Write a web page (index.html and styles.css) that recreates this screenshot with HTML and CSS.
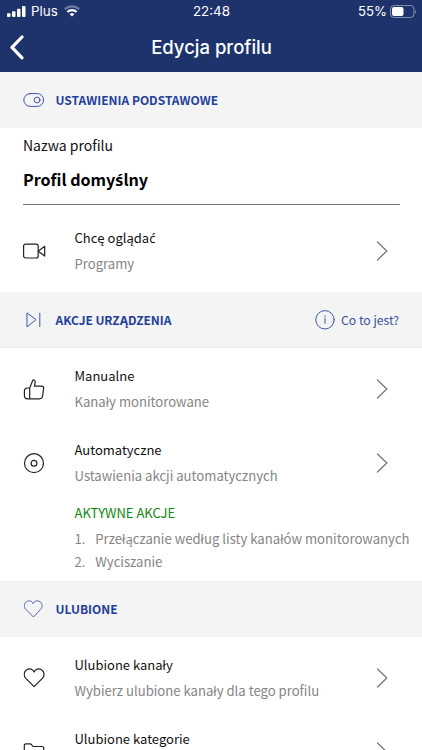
FILE: index.html
```html
<!DOCTYPE html>
<html lang="pl">
<head>
<meta charset="utf-8">
<meta name="viewport" content="width=device-width, initial-scale=1">
<title>Edycja profilu</title>
<link rel="stylesheet" href="styles.css">
</head>
<body>
<svg class="sprite" width="0" height="0">
  <symbol id="chevron" viewBox="0 0 12 20"><path d="M1.500 1 10.800 10 1.500 19"/></symbol>
  <symbol id="heart" viewBox="0 0 22 20"><path d="M10.600 18.600 2.300 10.300C-.100 7.900.300 3.700 2.900 2 5.800.100 9.500.900 10.600 4 11.700.900 15.400.100 18.300 2 20.900 3.700 21.300 7.900 18.900 10.300Z"/></symbol>
</svg>
<header class="top">
  <div class="status">
    <div class="carrier">
      <svg width="19" height="11" viewBox="0 0 19 11" fill="#fff"><rect x="0" y="7.300" width="3.500" height="3.700" rx=".9"/><rect x="5" y="5.200" width="3.500" height="5.800" rx=".9"/><rect x="10" y="2.800" width="3.500" height="8.200" rx=".9"/><rect x="15" y="0" width="3.500" height="11" rx=".9"/></svg>
      <span class="plus">Plus</span>
      <svg width="16" height="12" viewBox="0 0 16 12" fill="none" stroke="#fff" stroke-width="2.200"><path d="M.9 4.300a10 10 0 0 1 14.200 0" opacity=".35"/><path d="M3.400 7a6.500 6.500 0 0 1 9.200 0"/><path d="M5.700 9.200a3.300 3.300 0 0 1 4.600 0L8 11.600Z" fill="#fff" stroke="none"/></svg>
    </div>
    <span class="clock">22:48</span>
    <div class="power">
      <span>55%</span>
      <svg width="27" height="13" viewBox="0 0 27 13"><rect x=".5" y=".5" width="23.500" height="12" rx="3.500" fill="none" stroke="#fff" stroke-opacity=".45"/><rect x="2" y="2" width="11.500" height="9" rx="2" fill="#fff"/><path d="M25.200 4.500q1.500 2 0 4Z" fill="#fff" opacity=".5"/></svg>
    </div>
  </div>
  <div class="nav">
    <svg class="back" width="16" height="25" viewBox="0 0 16 25"><path d="M14 2 4 12.400 14 22.800"/></svg>
    <h1>Edycja profilu</h1>
  </div>
</header>

<main>
  <section>
    <div class="band">
      <svg class="ico blue" width="22" height="14" viewBox="0 0 22 14"><rect x=".3" y=".6" width="19.800" height="12.800" rx="6.400"/><circle cx="13.600" cy="7" r="2.900"/></svg>
      <h2>USTAWIENIA PODSTAWOWE</h2>
    </div>
    <div class="field">
      <label>Nazwa profilu</label>
      <div class="value">Profil domy<span class="acute">ś</span>lny</div>
    </div>
    <div class="row">
      <svg class="ico" width="23" height="16" viewBox="0 0 23 16"><rect x=".6" y="1.200" width="14.600" height="13.800" rx="2"/><path d="M15.200 8.200 21.700 3.300V13.100Z"/></svg>
      <div class="copy"><p class="name">Chcę ogląda<span class="acute">ć</span></p><p class="sub">Programy</p></div>
      <svg class="chev" width="12" height="20"><use href="#chevron"/></svg>
    </div>
  </section>

  <section>
    <div class="band device">
      <svg class="ico blue" width="22" height="16" viewBox="0 0 22 16"><path d="M3.800 1.100 12.500 7.700 3.800 14.700ZM16.300 1.200V14.600"/></svg>
      <h2>AKCJE URZĄDZENIA</h2>
      <a class="help">
        <svg class="ico blue" width="20" height="20" viewBox="0 0 20 20"><circle cx="10" cy="9.800" r="9.200"/><path d="M10 8.300V13.300M10 5.900V6.700"/></svg>
        <span>Co to jest?</span>
      </a>
    </div>
    <div class="list">
      <div class="row">
        <svg class="ico" width="22" height="22" viewBox="0 0 22 22"><path d="M6.200 10 9.200 2.500Q9.900 1.300 10.900 2.100 12 3 11.700 4.600L11 8.200H18.100Q20.400 8.200 20.100 10.400L19.100 18Q18.700 20.800 16 20.800H4.200Q.9 20.800.9 17.600V13.100Q.9 10 3.800 10H6.200V20.800"/></svg>
        <div class="copy"><p class="name">Manualne</p><p class="sub">Kanały monitorowane</p></div>
        <svg class="chev" width="12" height="20"><use href="#chevron"/></svg>
      </div>
      <div class="row">
        <svg class="ico" width="22" height="22" viewBox="0 0 22 22"><circle cx="10.500" cy="11.200" r="9.500"/><circle cx="10.500" cy="11.200" r="2.900"/></svg>
        <div class="copy"><p class="name">Automatyczne</p><p class="sub">Ustawienia akcji automatycznych</p></div>
        <svg class="chev" width="12" height="20"><use href="#chevron"/></svg>
      </div>
      <div class="active">
        <h3>AKTYWNE AKCJE</h3>
        <ol>
          <li><span class="num">1.</span><span>Przełączanie według listy kanałów monitorowanych</span></li>
          <li><span class="num">2.</span><span>Wyciszanie</span></li>
        </ol>
      </div>
    </div>
  </section>

  <section>
    <div class="band">
      <svg class="ico blue" width="22" height="18" viewBox="1 0 22 20"><use href="#heart" width="22" height="20"/></svg>
      <h2>ULUBIONE</h2>
    </div>
    <div class="list">
      <div class="row">
        <svg class="ico" width="22" height="20" viewBox="0 0 22 20"><use href="#heart" width="22" height="20"/></svg>
        <div class="copy"><p class="name">Ulubione kanały</p><p class="sub">Wybierz ulubione kanały dla tego profilu</p></div>
        <svg class="chev" width="12" height="20"><use href="#chevron"/></svg>
      </div>
      <div class="row">
        <svg class="ico" width="22" height="18" viewBox="0 0 22 18"><path d="M.8 15V2.500Q.8.800 2.500.800H6.500Q7.500.800 8.200 1.800L9.500 3.500H18.500Q20.300 3.500 20.300 5.300V15Q20.300 17 18.500 17H2.800Q.8 17 .8 15Z"/></svg>
        <div class="copy"><p class="name">Ulubione kategorie</p></div>
        <svg class="chev" width="12" height="20"><use href="#chevron"/></svg>
      </div>
    </div>
  </section>
</main>
</body>
</html>
```

FILE: styles.css
```css
* { box-sizing: border-box; }
html, body { margin: 0; height: 750px; overflow: hidden; background: #fff; }
body { font-family: "Noto Sans CJK SC", "Noto Sans", sans-serif; font-size: 14px; color: #111; }
h1, h2, h3, p, ol { margin: 0; padding: 0; font-weight: 400; }
span, p, h1, h2, h3, label { white-space: nowrap; }
svg { display: block; flex: none; }
.sprite { display: none; }
main { height: 678px; overflow: hidden; }
.acute { font-family: "Noto Sans", sans-serif; line-height: 1; }

.top { height: 72px; background: #1e336c; color: #fff; font-family: Inter, sans-serif; }
.status { display: grid; grid-template-columns: 1fr auto 1fr; height: 22px; align-items: center; padding: 0 5px 0 7px; font-size: 13.400px; line-height: 22px; }
.carrier { display: flex; align-items: center; gap: 5px; }
.plus { margin-right: 1px; }
.clock { padding-right: 1px; }
.power { display: flex; align-items: center; justify-content: flex-end; gap: 3px; font-size: 13.200px; }
.nav { display: grid; grid-template-columns: 30px 1fr 30px; height: 50px; align-items: center; padding: 0 7px 0 8px; }
.nav h1 { font-size: 18.500px; font-weight: 500; line-height: 24px; text-align: center; }
.back { fill: none; stroke: #fff; stroke-width: 3.200; stroke-linecap: round; stroke-linejoin: round; }

.band { display: flex; align-items: center; height: 56px; padding: 0 23px; background: #f4f4f4; border-bottom: 1px solid #efefef; }
.band h2 { margin-left: 9.500px; font-size: 12px; font-weight: 700; line-height: 20px; color: #233f9c; }
.device h2 { letter-spacing: -.05px; }
.ico { width: 23px; fill: none; stroke: #222; stroke-width: 1.200; stroke-linejoin: round; stroke-linecap: round; }
.blue { stroke: #4055a8; stroke-width: 1; }
.help { display: flex; align-items: center; gap: 6px; margin-left: auto; color: #3850a3; font-size: 12.200px; line-height: 20px; }
.help .ico { width: 20px; }

.field { height: 90px; padding: 7px 22px 0 23px; }
.field label { display: block; font-size: 14px; line-height: 20px; }
.value { height: 50px; border-bottom: 1px solid #777; font-size: 16.100px; font-weight: 700; line-height: 48px; color: #000; }
.list { padding-top: 8px; }
.row { display: flex; align-items: center; height: 74px; padding: 0 34px 8px 23px; }
.copy { flex: 1; margin-left: 28.500px; align-self: flex-start; padding-top: 7px; }
.name { font-size: 13px; line-height: 26px; }
.sub { font-size: 13.120px; line-height: 26px; color: #858585; }
.chev { fill: none; stroke: #777; stroke-width: 1.300; stroke-linecap: round; }

.active { height: 77px; padding: 0 0 0 74.500px; }
.active h3 { font-size: 13px; line-height: 18px; color: #108810; }
.active ol { list-style: none; padding-top: 5px; }
.active li { display: flex; height: 23px; line-height: 23px; font-size: 13.150px; color: #858585; }
.num { width: 20.800px; }
```
